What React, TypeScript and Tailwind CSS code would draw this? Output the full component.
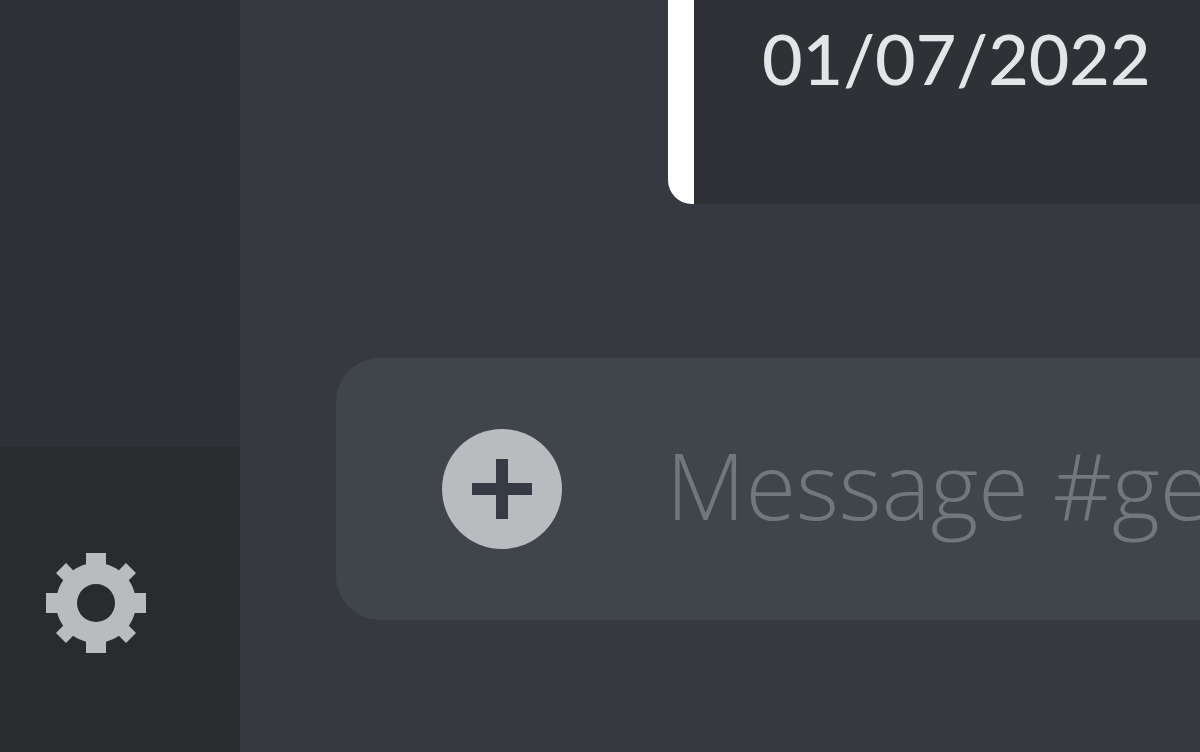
function GearIcon() {
  return (
    <svg viewBox="0 0 24 24" className="size-30" fill="currentColor" aria-hidden="true">
      <path
        fillRule="evenodd"
        clipRule="evenodd"
        d="M19.738 10H22V14H19.739C19.498 14.931 19.1 15.798 18.565 16.564L20 18L18 20L16.565 18.564C15.797 19.099 14.932 19.498 14 19.738V22H10V19.738C9.069 19.498 8.203 19.099 7.436 18.564L6 20L4 18L5.436 16.564C4.901 15.799 4.502 14.932 4.262 14H2V10H4.262C4.502 9.068 4.9 8.202 5.436 7.436L4 6L6 4L7.436 5.436C8.202 4.9 9.068 4.502 10 4.262V2H14V4.261C14.932 4.502 15.797 4.9 16.565 5.435L18 4L20 6L18.564 7.436C19.099 8.202 19.498 9.069 19.738 10ZM12 15.8A3.8 3.8 0 1 0 12 8.2A3.8 3.8 0 0 0 12 15.8Z"
      />
    </svg>
  );
}

function PlusIcon() {
  return (
    <svg viewBox="0 0 20 20" className="size-30" aria-hidden="true">
      <circle cx="10" cy="10" r="10" fill="#b9bbbe" />
      <path d="M9 5h2v4h4v2h-4v4H9v-4H5V9h4z" fill="#363b45" />
    </svg>
  );
}

function Sidebar() {
  return (
    <aside className="flex w-60 shrink-0 flex-col bg-[#2f3136]">
      <nav className="flex-1" aria-label="Channels" />
      <div className="bg-[#292b2f] pt-24 pr-21 pb-[89px] pl-9">
        <button type="button" aria-label="User Settings" className="block text-[#b9bbbe]">
          <GearIcon />
        </button>
      </div>
    </aside>
  );
}

function Embed({ date }: { date: string }) {
  return (
    <article className="ml-107 rounded-bl-[24px] border-l-26 border-white bg-[#2f3136] pb-22 pl-17">
      <time className="block text-[70px] leading-29 font-medium text-[#e4e5e6]">{date}</time>
    </article>
  );
}

function Composer() {
  return (
    <form className="mb-33 ml-24 flex items-center gap-26 rounded-l-[44px] bg-[#40444b] py-[71px] pl-[106px]">
      <button type="button" aria-label="Add attachment" className="shrink-0">
        <PlusIcon />
      </button>
      <input
        type="text"
        aria-label="Message"
        placeholder="Message #ge"
        className="h-30 min-w-0 flex-1 bg-transparent pb-2 font-['Open_Sans',sans-serif] text-[92px] font-light text-[#dcddde] outline-none placeholder:text-[#72767d]"
      />
    </form>
  );
}

export default function App() {
  return (
    <div className="flex h-screen overflow-hidden bg-[#363940] font-['Lato','Open_Sans',sans-serif]">
      <Sidebar />
      <main className="flex min-w-0 flex-1 flex-col justify-between">
        <Embed date="01/07/2022" />
        <Composer />
      </main>
    </div>
  );
}
